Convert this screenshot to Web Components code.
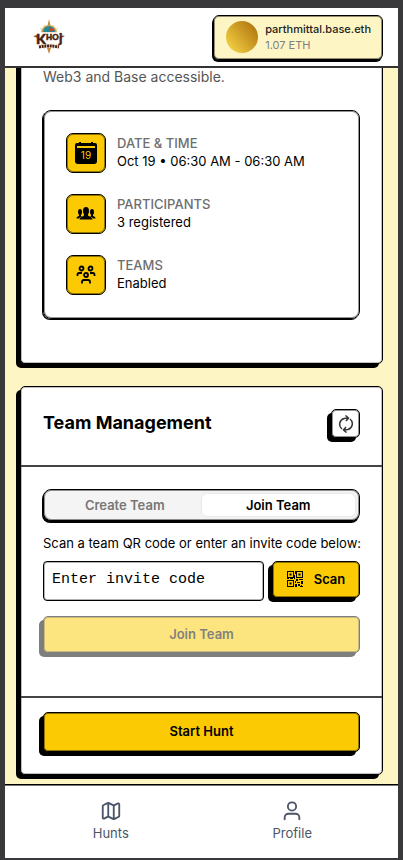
<!DOCTYPE html>
<html lang="en">
<head>
<meta charset="utf-8">
<meta name="viewport" content="width=device-width, initial-scale=1">
<title>Khoj</title>
<style>
  :root {
    --soft: rgba(0, 0, 0, .42);
    --gold: #fbca02;
    --cream: #fdf5c4;
    --muted: #6e6e6e;
    --hard: -4px 4px 0 #000;
  }
  * { box-sizing: border-box; }
  body {
    margin: 0;
    background: #39393b;
    font-family: Inter, "Liberation Sans", sans-serif;
    font-size: 13px;
    line-height: 20px;
    color: #000;
  }
</style>
</head>
<body>
<khoj-app></khoj-app>

<script>
const base = `*{box-sizing:border-box}svg{display:block}`;
function define(name, css, html, setup) {
  customElements.define(name, class extends HTMLElement {
    constructor() {
      super();
      const t = document.createElement('template');
      t.innerHTML = `<style>${base}${css}</style>${html}`;
      this.attachShadow({ mode: 'open' }).append(t.content.cloneNode(true));
    }
    connectedCallback() { if (setup) setup.call(this, this.shadowRoot); }
  });
}

const icons = {
  calendar: `<svg width="24" height="24" viewBox="0 0 24 24"><path d="M3 2h2V1h2v1h10V1h2v1h2a2 2 0 0 1 2 2v16a3 3 0 0 1-3 3H4a3 3 0 0 1-3-3V4a2 2 0 0 1 2-2z"/><rect x="3" y="5" width="18" height="2" fill="#fbca02"/><text x="12" y="18" text-anchor="middle" font-size="10" fill="#fbca02">19</text></svg>`,
  people: `<svg width="20" height="20" viewBox="0 0 20 20"><ellipse cx="10" cy="7" rx="3" ry="4"/><path d="M8 9h4v2.500c1 1 4 1 4.500 4H3.500C4 12.500 7 12.500 8 11.500z"/><ellipse cx="4" cy="8" rx="2" ry="3"/><ellipse cx="16" cy="8" rx="2" ry="3"/><path d="M3 10h2v2l1 .5Q3.500 13 3 14.500H.5c0-2 1.500-2 2.500-2.500zM17 10h-2v2l-1 .5q2.500.5 3 2h2.500c0-2-1.500-2-2.500-2.500z"/></svg>`,
  teams: `<svg width="20" height="20" viewBox="0 0 20 20" fill="none" stroke="#000" stroke-width="1.800"><circle cx="5.500" cy="3.500" r="2"/><circle cx="14.500" cy="3.500" r="2"/><circle cx="10" cy="10" r="2"/><path d="M1.500 11V9.500Q1.500 8 3 8h3M18.500 11V9.500Q18.500 8 17 8h-3M6 18.500V17q0-2 2-2h4q2 0 2 2v1.500"/></svg>`,
  refresh: `<svg width="18" height="18" viewBox="0 0 18 18" fill="none" stroke="#333" stroke-width="1.500"><path d="M5 14A6 6 0 0 1 7 3.500L11 3M8.500.5L11.500 3 9 6M13 4a6 6 0 0 1-2 10.500L7 15M9.500 17.500L6.500 15 9 12"/></svg>`,
  qr: `<svg width="16" height="16" viewBox="0 0 16 16"><path fill-rule="evenodd" d="M0 0h7v7H0zM1 1v5h5V1zM9 0h7v7H9zM10 1v5h5V1zM0 9h7v7H0zM1 10v5h5v-5zM2.500 2.500h2v2h-2zM11.500 2.500h2v2h-2zM2.500 11.500h2v2h-2zM8 0h1v3H8zM7 4h1v4H7zM0 7h2v1H0zM3 7h3v1H3zM9 8h2v2H9zM12 8h4v1h-4zM8 10h1v2H8zM10 11h3v1h-3zM14 10h2v3h-2zM8 13h2v3H8zM11 13h2v2h-2zM13 15h3v1h-3zM14 14h1v1h-1z"/></svg>`,
  map: `<svg width="22" height="22" viewBox="0 0 24 24" fill="none" stroke="currentColor" stroke-width="2" stroke-linejoin="round" stroke-linecap="round"><path d="M14.106 5.553a2 2 0 0 0 1.788 0l3.659-1.830A1 1 0 0 1 21 4.619v12.764a1 1 0 0 1-.553.894l-4.553 2.277a2 2 0 0 1-1.788 0l-4.212-2.106a2 2 0 0 0-1.788 0l-3.659 1.830A1 1 0 0 1 3 19.381V6.618a1 1 0 0 1 .553-.894l4.553-2.277a2 2 0 0 1 1.788 0zM15 5.764v15M9 3.236v15"/></svg>`,
  user: `<svg width="22" height="22" viewBox="0 0 24 24" fill="none" stroke="currentColor" stroke-width="2" stroke-linejoin="round" stroke-linecap="round"><circle cx="12" cy="7" r="4.500"/><path d="M4 21v-2a4 4 0 0 1 4-4h8a4 4 0 0 1 4 4v2"/></svg>`
};

define('khoj-icon', `:host{display:block;flex:none}`, ``, function (root) {
  const t = document.createElement('template');
  t.innerHTML = icons[this.getAttribute('name')];
  root.append(t.content);
});

define('khoj-logo', `:host{display:block}`, `
<svg width="34" height="36" viewBox="0 0 34 36" role="img" aria-label="Khoj logo">
  <g stroke="#c99646" stroke-width="1"><path d="M16 4v28M1 18h30M7 9l18 18M25 9L7 27M11 6l10 24M21 6L11 30" opacity=".45"/></g>
  <path d="M16 0l2 9h-4zM16 35l-2-6h4z" fill="#c58b3c"/>
  <path d="M0 17l5-1v3zM32 17l-5-1v3z" fill="#7a4527"/>
  <path d="M8 14a8 8 0 0 1 16 0z" fill="#d8a34c"/>
  <path d="M10 13a6 6 0 0 1 12 0z" fill="#218b9a"/>
  <path d="M16 8l6 3-6 2z" fill="#c9431f"/>
  <path d="M4 13h24v12H4z" fill="#fff" opacity=".75"/>
  <g font-family="Lato, sans-serif" font-weight="900" fill="#4a1f10" stroke="#4a1f10" stroke-width=".5"><text x="3" y="25" font-size="14">K</text><text x="13" y="21" font-size="8">HO</text><text x="26" y="24" font-size="13">j</text></g>
  <path d="M6 28q10-2 20 0" stroke="#4a1f10" stroke-width="3" stroke-dasharray="2 .7" fill="none"/>
</svg>`);

define('account-chip', `
:host{display:block}
button{display:flex;align-items:center;gap:7px;height:45px;padding:0 11px 0 12px;border:1px solid #000;border-radius:6px;background:var(--cream);box-shadow:-1px 2px 0 #000,inset 0 0 0 1px var(--soft);font:inherit;text-align:left;color:#222}
.face{width:32px;height:32px;border-radius:50%;background:linear-gradient(50deg,#fbdc4a,#a96a08)}
.who{font-size:11px;line-height:16px;font-weight:500}
.who span{display:block}.who ::slotted([slot=balance]){color:#808080;font-weight:400}`, `
<button type="button"><span class="face"></span><span class="who"><span><slot></slot></span><span><slot name="balance"></slot></span></span></button>`);

define('app-header', `
:host{display:block}
header{display:flex;justify-content:space-between;align-items:center;height:60px;padding:0 15px 0 28px;background:#fff;border-bottom:2px solid #333}`,
`<header><slot></slot></header>`);

define('hard-card', `
:host{display:block;background:#fff;border:1px solid #000;border-radius:5px;box-shadow:var(--hard),inset 0 0 0 1px rgba(0,0,0,.25)}`,
`<slot></slot>`);

define('info-row', `
:host{display:flex;align-items:center;gap:11px}
.tile{display:grid;place-items:center;width:40px;height:40px;border:1px solid #000;border-radius:7px;background:var(--gold);box-shadow:inset 0 0 0 1px var(--soft)}
dl{margin:0;padding-bottom:2px;line-height:18px}dt{color:var(--muted);font-weight:500}dd{margin:0}`,
`<span class="tile"></span><dl><dt></dt><dd><slot></slot></dd></dl>`, function (root) {
  root.querySelector('dt').textContent = this.getAttribute('label');
  root.querySelector('.tile').innerHTML = `<khoj-icon name="${this.getAttribute('icon')}"></khoj-icon>`;
});

define('hunt-details', `
:host{display:block;padding:22px 22px 44px}
p{margin:0 0 25px;font-size:14px;line-height:17px;color:#555}
.box{display:grid;gap:21px;padding:22px 22px 23px;border:1px solid #000;border-radius:8px;box-shadow:-1px 1px 0 #000,inset 0 0 0 1px var(--soft)}`, `
<p>Web3 and Base accessible.</p>
<div class="box">
<info-row icon="calendar" label="DATE &amp; TIME">Oct 19 • 06:30 AM - 06:30 AM</info-row>
<info-row icon="people" label="PARTICIPANTS">3 registered</info-row>
<info-row icon="teams" label="TEAMS">Enabled</info-row>
</div>`);

define('hard-button', `
:host{display:block}
button{display:flex;align-items:center;justify-content:center;gap:11px;width:100%;height:var(--h,40px);padding:0 var(--px,15px) var(--pb,2px);border:1px solid #000;border-radius:5px;background:var(--bg,var(--gold));box-shadow:var(--hard),inset 0 0 0 1px var(--soft);font:inherit;font-weight:600;color:#000}
button:disabled{opacity:.5}`,
`<button type="button"><slot></slot></button>`, function (root) {
  const b = root.querySelector('button');
  b.disabled = this.hasAttribute('disabled');
  if (this.hasAttribute('label')) b.setAttribute('aria-label', this.getAttribute('label'));
});

define('team-tabs', `
:host{display:block}
div{display:grid;grid-template-columns:1fr 1fr;height:32px;padding:4px;border:1px solid #000;border-radius:8px;background:#f4f4f4;box-shadow:-1px 2px 0 #000,inset 0 0 0 1px var(--soft)}
button{border:0;padding:0;border-radius:5px;background:none;font:inherit;font-weight:600;color:#777}
button[aria-selected=true]{background:#fff;color:#000;box-shadow:0 0 3px rgba(0,0,0,.1)}`,
`<div role="tablist"><button type="button" role="tab" aria-selected="false">Create Team</button><button type="button" role="tab" aria-selected="true">Join Team</button></div>`);

define('team-panel', `
:host{display:block}
header{display:flex;justify-content:space-between;padding:22px 22px 27px;border-bottom:2px solid #444}
h2{margin:0;font-size:18px;line-height:27px;font-weight:700}
.refresh{width:29px;--h:29px;--px:0;--pb:0;--bg:#fff}
section{padding:22px 22px 43px}
label{display:block;margin:13px 0 8px;line-height:19px;white-space:nowrap}
.row{display:flex;gap:8px;margin-bottom:15px}
input{flex:1;min-width:0;height:40px;padding:0 8px 3px;border:1px solid #000;border-radius:4px;background:#fff;box-shadow:inset 0 0 0 1px rgba(0,0,0,.3);font:15px "Liberation Mono",monospace;color:#000}
input::placeholder{color:#000;opacity:1}
.scan{width:88px;--h:37px}
.join{--h:37px}
footer{padding:14px 22px 22px;border-top:2px solid #444}`, `
<header><h2>Team Management</h2><hard-button class="refresh" label="Refresh"><khoj-icon name="refresh"></khoj-icon></hard-button></header>
<section>
<team-tabs></team-tabs>
<label for="code">Scan a team QR code or enter an invite code below:</label>
<div class="row"><input id="code" placeholder="Enter invite code"><hard-button class="scan"><khoj-icon name="qr"></khoj-icon>Scan</hard-button></div>
<hard-button class="join" disabled>Join Team</hard-button>
</section>
<footer><hard-button>Start Hunt</hard-button></footer>`);

define('app-nav', `
:host{display:block}
nav{display:grid;grid-template-columns:1fr 1fr;height:74px;padding:15px 15px 0;background:#fff;border-top:1px solid #000;box-shadow:inset 0 1px 0 #777}
a{display:flex;flex-direction:column;align-items:center;gap:1px;color:#4b5567;text-decoration:none}`, `
<nav><a href="#hunts"><khoj-icon name="map"></khoj-icon>Hunts</a><a href="#profile"><khoj-icon name="user"></khoj-icon>Profile</a></nav>`);

define('khoj-app', `
:host{display:flex;flex-direction:column;height:100vh;padding:8px 5px 2px}
app-header,app-nav{flex:none}
main{flex:1;min-height:0;overflow:hidden;display:flex;flex-direction:column;justify-content:flex-end;gap:22px;padding:0 15px 9px;background:var(--cream)}
hard-card{flex:none}`, `
<app-header><khoj-logo></khoj-logo><account-chip>parthmittal.base.eth<span slot="balance">1.07 ETH</span></account-chip></app-header>
<main><hard-card><hunt-details></hunt-details></hard-card><hard-card><team-panel></team-panel></hard-card></main>
<app-nav></app-nav>`);
</script>
</body>
</html>
